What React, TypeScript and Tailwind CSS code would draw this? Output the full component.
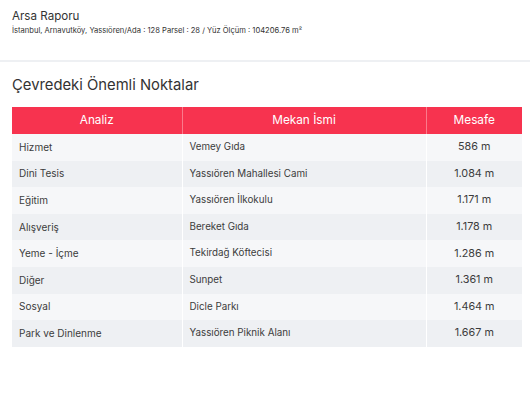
import React from "react";

const rows: [string, string, string][] = [
  ["Hizmet", "Vemey Gıda", "586 m"],
  ["Dini Tesis", "Yassıören Mahallesi Cami", "1.084 m"],
  ["Eğitim", "Yassıören İlkokulu", "1.171 m"],
  ["Alışveriş", "Bereket Gıda", "1.178 m"],
  ["Yeme - İçme", "Tekirdağ Köftecisi", "1.286 m"],
  ["Diğer", "Sunpet", "1.361 m"],
  ["Sosyal", "Dicle Parkı", "1.464 m"],
  ["Park ve Dinlenme", "Yassıören Piknik Alanı", "1.667 m"],
];

export default function App() {
  return (
    <div
      className="w-[530px] h-[393px] bg-white text-[#333] overflow-hidden"
      style={{ fontFamily: "Inter, 'Noto Sans', sans-serif" }}
    >
      <div className="h-[60px] px-3 pt-[9px]">
        <div className="text-[11.6px] leading-[15px] text-[#333]">Arsa Raporu</div>
        <div className="text-[7.6px] leading-[10px] mt-[2px] text-[#333]">
          İstanbul, Arnavutköy, Yassıören/Ada : 128 Parsel : 28 / Yüz Ölçüm : 104206.76 m²
        </div>
      </div>
      <div className="h-[2px] bg-[#eef0f3]" />
      <div className="px-3">
        <div className="text-[14.8px] leading-[20px] mt-[13px] text-[#333]">Çevredeki Önemli Noktalar</div>
        <table className="mt-[12px] w-[510px] border-collapse text-[10px] text-[#3c3c3c]">
          <thead>
            <tr className="bg-[#f7334f] text-white h-[27px]">
              <th className="font-normal w-[170px] border-r border-[#fa7a8b] text-[11.8px]">Analiz</th>
              <th className="font-normal w-[244px] border-r border-[#fa7a8b] text-[11.8px]">Mekan İsmi</th>
              <th className="font-normal text-[11.8px]">Mesafe</th>
            </tr>
          </thead>
          <tbody>
            {rows.map((r, i) => (
              <tr key={i} className={`h-[26.6px] ${i % 2 === 0 ? "bg-[#f6f7f9]" : "bg-[#eef0f3]"}`}>
                <td className="pl-[7px] border-r border-white">{r[0]}</td>
                <td className="pl-[7px] border-r border-white text-[9.8px]">{r[1]}</td>
                <td className="text-center text-[10.8px]">{r[2]}</td>
              </tr>
            ))}
          </tbody>
        </table>
      </div>
    </div>
  );
}
